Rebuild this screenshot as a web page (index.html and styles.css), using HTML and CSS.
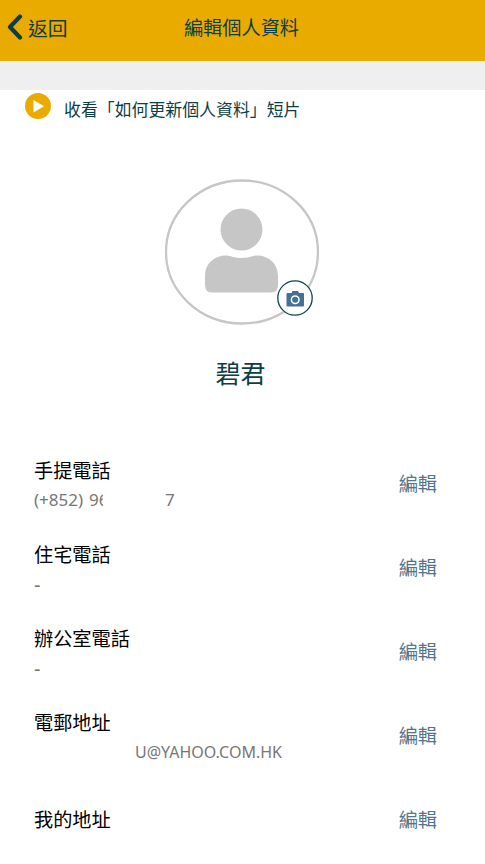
FILE: index.html
```html
<!DOCTYPE html>
<html lang="zh-HK">
<head>
<meta charset="utf-8">
<meta name="viewport" content="width=device-width">
<title>編輯個人資料</title>
<link rel="stylesheet" href="styles.css">
</head>
<body>
<header class="bar">
  <div class="back"><svg class="chevron" viewBox="0 0 16 26"><path d="M13 2.500 3 13 13 23.500"/></svg><span>返回</span></div>
  <h1>編輯個人資料</h1>
</header>
<div class="strip"></div>
<main>
  <div class="video">
    <svg class="play" viewBox="0 0 26 26"><circle cx="13" cy="13" r="13"/><path d="M8.500 7v12.500l10.500-6.250z"/></svg>
    <span>收看「如何更新個人資料」短片</span>
  </div>
  <section class="profile">
    <div class="avatar">
      <svg class="person" viewBox="0 0 154 146"><ellipse cx="77" cy="73" rx="76" ry="71.500"/><circle class="fill" cx="76.500" cy="50.500" r="21"/><path class="fill" d="M40 106V97C40 84 50 76.500 61 76.500 66 76.500 68 79 76.500 79S87 76.500 92 76.500C103 76.500 113 84 113 97V106Q113 113.500 106 113.500H47Q40 113.500 40 106Z"/></svg>
      <svg class="camera" viewBox="0 0 36 36"><circle class="ring" cx="18" cy="18" r="17.200"/><path class="body" d="M10.500 13h4l1-2h5.500l1 2h4q1 0 1 1v11.500q0 1-1 1H10.500q-1 0-1-1V14q0-1 1-1z"/><circle class="lens" cx="18.200" cy="19.800" r="3.800"/></svg>
    </div>
    <h2>碧君</h2>
  </section>
  <ul class="fields">
    <li><div><h3>手提電話</h3><p class="phone"><span>(+852)</span> <span class="cut">96</span><span class="last">7</span></p></div><a>編輯</a></li>
    <li><div><h3>住宅電話</h3><p class="none">-</p></div><a>編輯</a></li>
    <li><div><h3>辦公室電話</h3><p class="none">-</p></div><a>編輯</a></li>
    <li><div><h3>電郵地址</h3><p class="email">U@YAHOO.COM.HK</p></div><a>編輯</a></li>
    <li class="address"><div><h3>我的地址</h3></div><a>編輯</a></li>
  </ul>
</main>
</body>
</html>
```
FILE: styles.css
```css
* { box-sizing: border-box; margin: 0; padding: 0; }
body { height: 864px; overflow: hidden; background: #fff; color: #000; font-family: "Noto Sans", "Noto Sans CJK TC", sans-serif; }
.bar { display: grid; grid-template-columns: 1fr auto 1fr; align-items: center; height: 60.500px; padding: 0 9px 6px 7px; background: #eaab00; color: #0d3e46; }
.back { display: flex; align-items: center; gap: 5px; font-size: 19.800px; }
.chevron { width: 16px; height: 26px; fill: none; stroke: #0d3e46; stroke-width: 4.200; stroke-linecap: round; stroke-linejoin: round; }
h1 { padding-top: 1px; font-size: 19.200px; font-weight: 400; line-height: 28px; }
.strip { height: 29px; background: #efefef; }
.video { display: flex; gap: 13px; height: 89.500px; padding: 3px 25px; font-size: 16.900px; line-height: 34px; color: #0d3e46; }
.play { width: 26px; height: 26px; fill: #eaab00; }
.play path { fill: #fff; }
.profile { display: flex; flex-direction: column; align-items: center; height: 273.500px; padding-right: 2px; }
.avatar { position: relative; width: 154px; height: 146px; }
.person { display: block; width: 154px; height: 146px; fill: none; stroke: #c6c6c6; stroke-width: 2.300; }
.person .fill { fill: #c6c6c6; stroke: none; }
.camera { position: absolute; left: 112.500px; top: 100.500px; width: 36px; height: 36px; }
.ring { fill: #fff; stroke: #0d4850; stroke-width: 1.300; }
.body { fill: #446f97; }
.lens { fill: none; stroke: #fff; stroke-width: 1.500; }
h2 { margin: 29px 2px 0 0; font-size: 25px; font-weight: 400; line-height: 38px; color: #0d3e46; }
.fields { list-style: none; padding: 0 48px 0 34px; }
li { display: flex; justify-content: space-between; height: 84.200px; }
h3 { font-size: 19.200px; font-weight: 400; line-height: 36px; }
p { font-size: 16px; line-height: 22px; color: #777; }
a { font-size: 19.200px; line-height: 62px; color: #52758a; }
.phone { display: flex; gap: 6px; font-size: 17px; }
.cut { width: 14px; overflow: hidden; }
.last { margin-left: 56px; }
.none { font-size: 20px; line-height: 24px; }
.email { padding-left: 101px; }
.address { padding-top: 13px; }
.address a { line-height: 36px; }
```
